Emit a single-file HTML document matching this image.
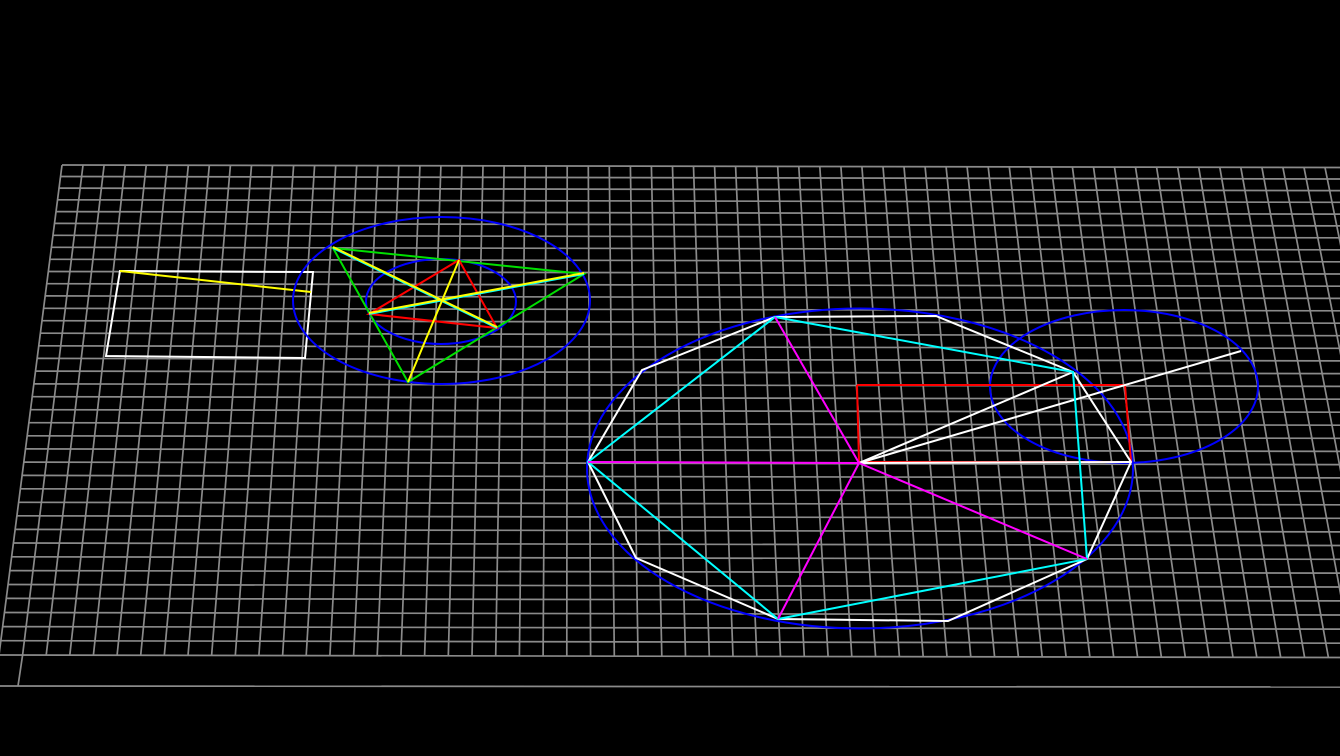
<!DOCTYPE html>
<html><head><meta charset="utf-8"><style>
html,body{margin:0;padding:0;background:#000;width:1340px;height:756px;overflow:hidden}
svg{display:block}
</style></head><body>
<svg id="s" width="1340" height="756" viewBox="0 0 1340 756" xmlns="http://www.w3.org/2000/svg">
<rect width="1340" height="756" fill="#000"/>
<g id="grid" stroke="#8a8a8a" stroke-width="1.7" fill="none"></g>
<g fill="none" stroke-width="2">
<polygon points="120,271 313,272 305,358 106,356" stroke="#fff"/>
<line x1="120" y1="271" x2="311" y2="292" stroke="#ff0"/>
<ellipse cx="441.5" cy="300.5" rx="148.5" ry="83.5" stroke="#0000ff"/>
<ellipse cx="441" cy="301.5" rx="75" ry="42.5" stroke="#0000ff"/>
<polygon points="333,248 584,274 408,382" stroke="#00e000"/>
<polygon points="459,260 369,314 497,328" stroke="#ff0000"/>
<line x1="333" y1="248" x2="497" y2="328" stroke="#0ff"/>
<line x1="584" y1="274" x2="369" y2="314" stroke="#0ff"/>
<line x1="333" y1="247" x2="497" y2="327" stroke="#ff0"/>
<line x1="584" y1="273" x2="369" y2="313" stroke="#ff0"/>
<line x1="459" y1="260" x2="408" y2="382" stroke="#ff0"/>
<ellipse cx="860" cy="468.5" rx="273" ry="160" stroke="#0000ff"/>
<ellipse cx="1124" cy="386.5" rx="134" ry="76.5" stroke="#0000ff"/>
<polyline points="857,385 1125,385 1131,462 859,462 857,385" stroke="#ff0000"/>
<polygon points="588,462 642,370 775,317 936,316 1073,372 1131,462 1087,559 948,621 778,619 636,558" stroke="#fff"/>
<line x1="859" y1="463" x2="1131" y2="462" stroke="#fff"/>
<line x1="859" y1="463" x2="1073" y2="372" stroke="#fff"/>
<line x1="859" y1="463" x2="1241" y2="351" stroke="#fff"/>
<polygon points="588,462 775,317 1073,372 1087,559 778,619" stroke="#0ff"/>
<line x1="859" y1="463" x2="588" y2="462" stroke="#f0f"/>
<line x1="859" y1="463" x2="775" y2="317" stroke="#f0f"/>
<line x1="859" y1="463" x2="1087" y2="559" stroke="#f0f"/>
<line x1="859" y1="463" x2="778" y2="619" stroke="#f0f"/>
</g>
</svg>
<script>
(function(){
var g=document.getElementById('grid'),h='';
function L(a,b,c,d){h+='<line x1="'+a.toFixed(1)+'" y1="'+b.toFixed(1)+'" x2="'+c.toFixed(1)+'" y2="'+d.toFixed(1)+'"/>';}
for(var j=0;j<=38;j++){var y=165+11.5*j+0.0367*j*j;var xl=62-63*(y-165)/490;if(xl<0)xl=0;L(xl,y,1340,y+2.5);}
for(var i=0;i<=66;i++){var xt=62+21.05*i,xb=-1+23.6*i+0.0025*i*i;L(xt,165+2.5*xt/1340,xb,655+2.5*xb/1340);}
L(22.6,655,18,686);
L(0,686,1340,687);
g.innerHTML=h;
})();
</script>
</body></html>
